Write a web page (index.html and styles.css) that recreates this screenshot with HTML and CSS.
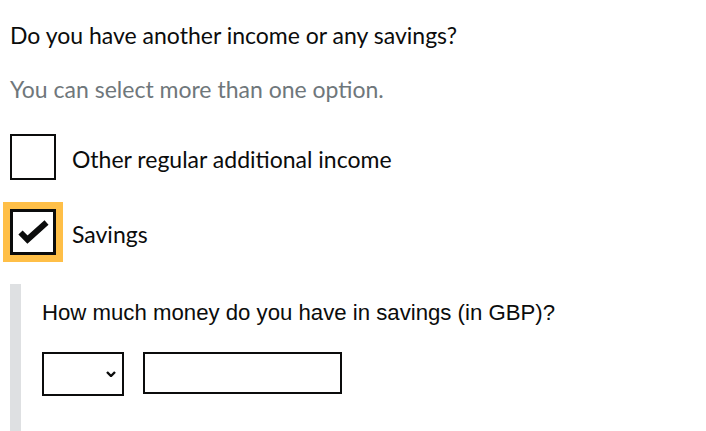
FILE: index.html
```html
<!DOCTYPE html>
<html lang="en">
<head>
  <meta charset="UTF-8">
  <meta name="viewport" content="width=device-width, initial-scale=1.0">
  <title>Income and savings</title>
  <link rel="stylesheet" href="styles.css">
</head>
<body>
  <div class="page">
    <fieldset class="fieldset">
      <legend class="legend">Do you have another income or any savings?</legend>
      <span class="hint">You can select more than one option.</span>

      <div class="checkboxes">
        <div class="item">
          <span class="box"></span>
          <span class="item-label">Other regular additional income</span>
        </div>

        <div class="item">
          <span class="box box-focus">
            <svg class="tick" width="40" height="40" viewBox="0 0 40 40">
              <polyline points="7.5,20.5 14.5,27.5 33.5,10.5" fill="none" stroke="#0b0c0c" stroke-width="6"/>
            </svg>
          </span>
          <span class="item-label">Savings</span>
        </div>

        <!-- shown when "Savings" is ticked -->
        <div class="conditional">
          <label class="cond-label" for="amount">How much money do you have in savings (in GBP)?</label>
          <div class="money">
            <div class="select">
              <svg width="10" height="6" viewBox="0 0 10 6">
                <polyline points="1,1 5,5 9,1" fill="none" stroke="#0b0c0c" stroke-width="2.4"/>
              </svg>
            </div>
            <input class="input" type="text" id="amount">
          </div>
        </div>
      </div>
    </fieldset>
  </div>
</body>
</html>
```

FILE: styles.css
```css
body {
  margin: 0;
  font-family: Lato, "Liberation Sans", sans-serif;
  font-size: 23px;
  line-height: 1.2;
  color: #0b0c0c;
  background: #fff;
}

.page {
  padding: 22px 10px 0;
}

.fieldset {
  border: 0;
  margin: 0;
  padding: 0;
  min-width: 0;
}

.legend {
  display: block;
  padding: 0;
}

.hint {
  display: block;
  margin-top: 26px;
  color: #6f777b;
}

.checkboxes {
  margin-top: 31px;
}

.item {
  display: flex;
  gap: 16px;
  margin-bottom: 29px;
}

.box {
  flex: none;
  width: 46px;
  height: 46px;
  box-sizing: border-box;
  border: 2px solid #0b0c0c;
  background: #fff;
}

.box-focus {
  border-width: 3px;
  box-shadow: 0 0 0 7px #ffbf47;
}

.tick {
  display: block;
}

.item-label {
  padding-top: 12px;
}

.conditional {
  border-left: 11px solid #dee0e2;
  padding: 16px 0 36px 21px;
}

.cond-label {
  display: block;
  font-family: "Liberation Sans", Arial, sans-serif;
  font-size: 22.2px;
  line-height: normal;
}

.money {
  display: flex;
  align-items: flex-start;
  gap: 19px;
  margin-top: 26px;
}

.select {
  display: flex;
  align-items: center;
  justify-content: flex-end;
  width: 82px;
  height: 44px;
  box-sizing: border-box;
  border: 2px solid #0b0c0c;
  padding-right: 6px;
}

.input {
  width: 199px;
  height: 42px;
  box-sizing: border-box;
  border: 2px solid #0b0c0c;
  border-radius: 0;
  margin: 0;
  padding: 5px;
  font: inherit;
  outline: none;
}
```
